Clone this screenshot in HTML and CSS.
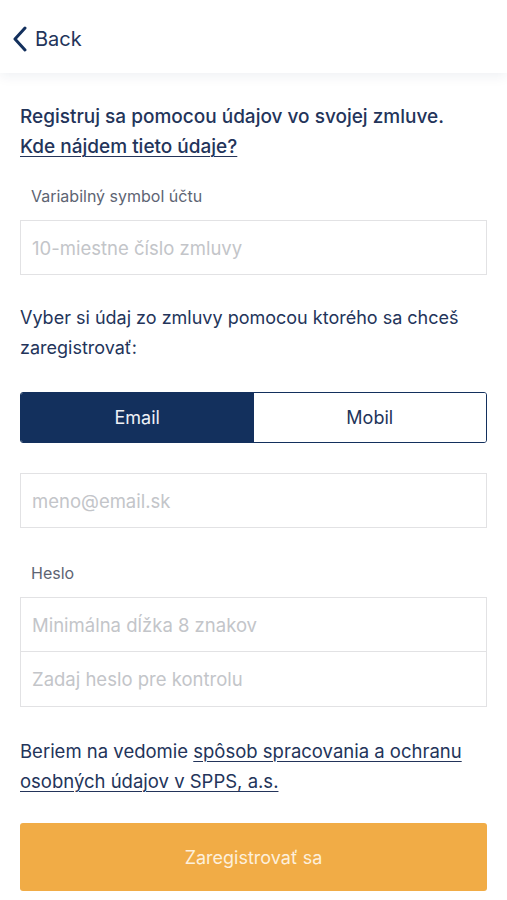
FILE: index.html
```html
<!DOCTYPE html>
<html lang="sk">
<head>
  <meta charset="UTF-8" />
  <meta name="viewport" content="width=device-width, initial-scale=1.0" />
  <title>Registrácia</title>
  <link rel="stylesheet" href="styles.css">
</head>
<body>
  <header class="topbar">
    <a class="back" href="#">
      <svg class="back-icon" viewBox="0 0 16 26" width="16" height="26">
        <path d="M13 2 L3 13 L13 24" />
      </svg>
      <span>Back</span>
    </a>
  </header>

  <main class="content">
    <p class="intro">
      Registruj sa pomocou údajov vo svojej zmluve.<br>
      <a href="#" class="link">Kde nájdem tieto údaje?</a>
    </p>

    <label class="field-label" for="vs">Variabilný symbol účtu</label>
    <input id="vs" class="input" type="text" placeholder="10-miestne číslo zmluvy">

    <p class="choose">Vyber si údaj zo zmluvy pomocou ktorého sa chceš zaregistrovať:</p>

    <div class="segment">
      <button class="segment-btn active">Email</button>
      <button class="segment-btn">Mobil</button>
    </div>

    <input class="input email" type="email" placeholder="meno@email.sk">

    <label class="field-label pwd-label" for="pwd">Heslo</label>
    <div class="input-group">
      <input id="pwd" class="input" type="password" placeholder="Minimálna dĺžka 8 znakov">
      <input class="input" type="password" placeholder="Zadaj heslo pre kontrolu">
    </div>

    <p class="consent">Beriem na vedomie <a href="#" class="link">spôsob spracovania a ochranu</a><br><a href="#" class="link">osobných údajov v SPPS, a.s.</a></p>

    <button class="submit">Zaregistrovať sa</button>
  </main>
</body>
</html>
```

FILE: styles.css
```css
:root {
  --navy: #13305d;
  --text: #23345a;
  --label: #5d6473;
  --placeholder: #c3c5c9;
  --border: #e2e2e4;
  --orange: #f1ac46;
  --font: 'Inter', 'Roboto', sans-serif;
}

* {
  box-sizing: border-box;
}

body {
  margin: 0;
  background: #fff;
  font-family: var(--font);
  color: var(--text);
  width: 507px;
  height: 900px;
  overflow: hidden;
}

.topbar {
  height: 73px;
  display: flex;
  align-items: center;
  padding: 0 12px;
  background: #fff;
  box-shadow: 0 3px 12px rgba(20, 40, 80, 0.07);
  position: relative;
  z-index: 1;
}

.back {
  display: flex;
  align-items: center;
  gap: 7px;
  color: var(--text);
  text-decoration: none;
  font-size: 20px;
  margin-top: 4px;
}

.back-icon path {
  fill: none;
  stroke: var(--navy);
  stroke-width: 3;
  stroke-linecap: round;
  stroke-linejoin: round;
}

.content {
  padding: 29px 20px 0;
  display: flex;
  flex-direction: column;
}

.intro,
.choose,
.consent {
  margin: 0;
  font-size: 18px;
  line-height: 30px;
  color: var(--text);
}

.intro {
  font-size: 19px;
  font-weight: 500;
}

.link {
  color: var(--text);
  text-decoration: underline;
  text-underline-offset: 3px;
  text-decoration-thickness: 1px;
}

.field-label {
  font-size: 16px;
  color: var(--label);
  padding-left: 11px;
  margin: 24px 0 14px;
}

.pwd-label {
  margin-top: 35px;
}

.input {
  display: block;
  width: 100%;
  height: 55px;
  border: 1.5px solid var(--border);
  border-radius: 0;
  padding: 0 11px;
  font-family: var(--font);
  font-size: 18.5px;
  color: var(--text);
  background: #fff;
  outline: none;
}

.input::placeholder {
  color: var(--placeholder);
}

.choose {
  margin-top: 28px;
}

.segment {
  display: flex;
  margin-top: 29px;
  height: 51px;
  border: 1.5px solid var(--navy);
  border-radius: 3px;
  overflow: hidden;
}

.segment-btn {
  flex: 1;
  border: 0;
  background: #fff;
  color: var(--text);
  font-family: var(--font);
  font-size: 18px;
}

.segment-btn.active {
  background: var(--navy);
  color: #eef1f6;
}

.email {
  margin-top: 30px;
}

.input-group .input + .input {
  border-top: 0;
}

.consent {
  margin-top: 29px;
  font-size: 18.5px;
}

.submit {
  margin-top: 27px;
  height: 68px;
  border: 0;
  border-radius: 3px;
  background: var(--orange);
  color: #fdf0dc;
  font-family: var(--font);
  font-size: 18px;
}
```
